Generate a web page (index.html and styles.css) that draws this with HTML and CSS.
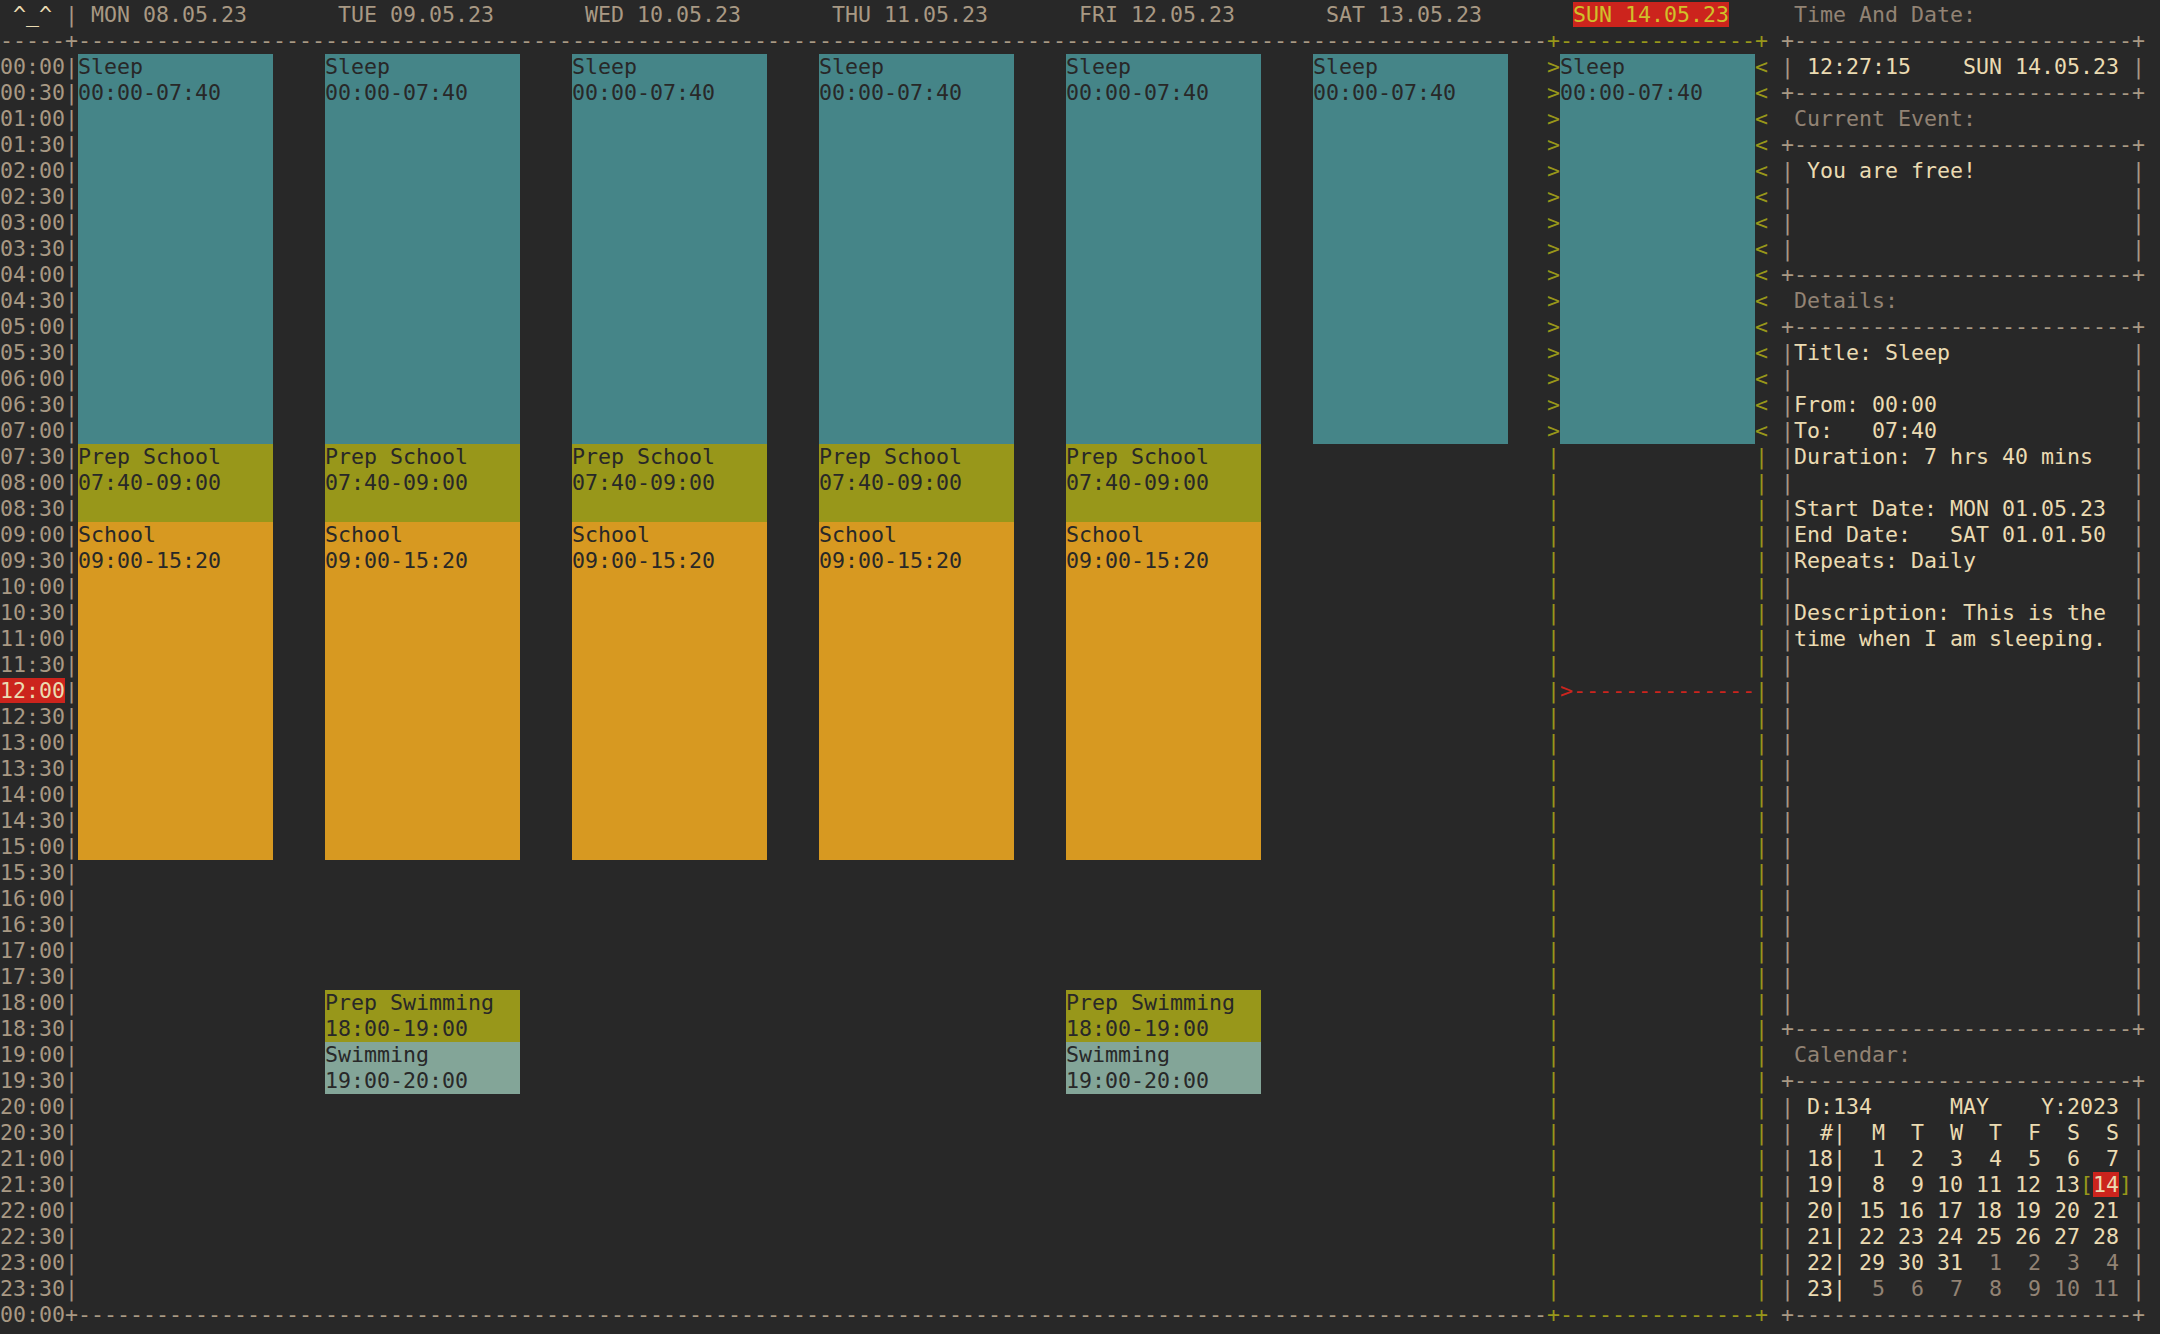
FILE: index.html
```html
<!DOCTYPE html>
<html lang="en">
<head>
<meta charset="utf-8">
<title>Week calendar</title>
<link rel="stylesheet" href="styles.css">
</head>
<body>
<div class="screen">
  <section class="week">
    <div class="lane head">
      <div class="time"> <span class="face">^_^</span> |</div>
      <div class="day-head">MON 08.05.23</div>
      <div class="day-head">TUE 09.05.23</div>
      <div class="day-head">WED 10.05.23</div>
      <div class="day-head">THU 11.05.23</div>
      <div class="day-head">FRI 12.05.23</div>
      <div class="day-head">SAT 13.05.23</div>
      <div class="today-head"><span class="cur">SUN 14.05.23</span></div>
    </div>
    <div class="rule">
      <span class="lead">-----+</span><span class="fill">-----------------------------------------------------------------------------------------------------------------</span><span class="end">+---------------+</span>
    </div>
    <div class="lane body">
      <div class="time times">00:00|
00:30|
01:00|
01:30|
02:00|
02:30|
03:00|
03:30|
04:00|
04:30|
05:00|
05:30|
06:00|
06:30|
07:00|
07:30|
08:00|
08:30|
09:00|
09:30|
10:00|
10:30|
11:00|
11:30|
<span class="hl">12:00</span>|
12:30|
13:00|
13:30|
14:00|
14:30|
15:00|
15:30|
16:00|
16:30|
17:00|
17:30|
18:00|
18:30|
19:00|
19:30|
20:00|
20:30|
21:00|
21:30|
22:00|
22:30|
23:00|
23:30|</div>
      <div class="day">
        <div class="ev sleep" style="grid-row: 1 / span 15">Sleep
00:00-07:40</div>
        <div class="ev prep" style="grid-row: 16 / span 3">Prep School
07:40-09:00</div>
        <div class="ev school" style="grid-row: 19 / span 13">School
09:00-15:20</div>
      </div>
      <div class="day">
        <div class="ev sleep" style="grid-row: 1 / span 15">Sleep
00:00-07:40</div>
        <div class="ev prep" style="grid-row: 16 / span 3">Prep School
07:40-09:00</div>
        <div class="ev school" style="grid-row: 19 / span 13">School
09:00-15:20</div>
        <div class="ev prep" style="grid-row: 37 / span 2">Prep Swimming
18:00-19:00</div>
        <div class="ev swim" style="grid-row: 39 / span 2">Swimming
19:00-20:00</div>
      </div>
      <div class="day">
        <div class="ev sleep" style="grid-row: 1 / span 15">Sleep
00:00-07:40</div>
        <div class="ev prep" style="grid-row: 16 / span 3">Prep School
07:40-09:00</div>
        <div class="ev school" style="grid-row: 19 / span 13">School
09:00-15:20</div>
      </div>
      <div class="day">
        <div class="ev sleep" style="grid-row: 1 / span 15">Sleep
00:00-07:40</div>
        <div class="ev prep" style="grid-row: 16 / span 3">Prep School
07:40-09:00</div>
        <div class="ev school" style="grid-row: 19 / span 13">School
09:00-15:20</div>
      </div>
      <div class="day">
        <div class="ev sleep" style="grid-row: 1 / span 15">Sleep
00:00-07:40</div>
        <div class="ev prep" style="grid-row: 16 / span 3">Prep School
07:40-09:00</div>
        <div class="ev school" style="grid-row: 19 / span 13">School
09:00-15:20</div>
        <div class="ev prep" style="grid-row: 37 / span 2">Prep Swimming
18:00-19:00</div>
        <div class="ev swim" style="grid-row: 39 / span 2">Swimming
19:00-20:00</div>
      </div>
      <div class="day">
        <div class="ev sleep" style="grid-row: 1 / span 15">Sleep
00:00-07:40</div>
      </div>
      <div class="today">
        <div class="marks left">&gt;
&gt;
&gt;
&gt;
&gt;
&gt;
&gt;
&gt;
&gt;
&gt;
&gt;
&gt;
&gt;
&gt;
&gt;
|
|
|
|
|
|
|
|
|
|
|
|
|
|
|
|
|
|
|
|
|
|
|
|
|
|
|
|
|
|
|
|
|</div>
        <div class="ev sleep" style="grid-row: 1 / span 15">Sleep
00:00-07:40</div>
        <div class="now">&gt;--------------</div>
        <div class="marks right">&lt;
&lt;
&lt;
&lt;
&lt;
&lt;
&lt;
&lt;
&lt;
&lt;
&lt;
&lt;
&lt;
&lt;
&lt;
|
|
|
|
|
|
|
|
|
|
|
|
|
|
|
|
|
|
|
|
|
|
|
|
|
|
|
|
|
|
|
|
|</div>
      </div>
    </div>
    <div class="rule">
      <span class="lead">00:00+</span><span class="fill">-----------------------------------------------------------------------------------------------------------------</span><span class="end">+---------------+</span>
    </div>
  </section>

  <aside class="side">
    <div class="title">Time And Date:</div>
    <div class="hr">+--------------------------+</div>
    <div class="box rows-1">
      <div class="rail">|</div>
      <div class="inner"> 12:27:15    SUN 14.05.23 </div>
      <div class="rail">|</div>
    </div>
    <div class="hr">+--------------------------+</div>

    <div class="title">Current Event:</div>
    <div class="hr">+--------------------------+</div>
    <div class="box rows-4">
      <div class="rail">|
|
|
|</div>
      <div class="inner"> You are free!</div>
      <div class="rail">|
|
|
|</div>
    </div>
    <div class="hr">+--------------------------+</div>

    <div class="title">Details:</div>
    <div class="hr">+--------------------------+</div>
    <div class="box rows-26">
      <div class="rail">|
|
|
|
|
|
|
|
|
|
|
|
|
|
|
|
|
|
|
|
|
|
|
|
|
|</div>
      <div class="inner">Title: Sleep

From: 00:00
To:   07:40
Duration: 7 hrs 40 mins

Start Date: MON 01.05.23
End Date:   SAT 01.01.50
Repeats: Daily

Description: This is the
time when I am sleeping.</div>
      <div class="rail">|
|
|
|
|
|
|
|
|
|
|
|
|
|
|
|
|
|
|
|
|
|
|
|
|
|</div>
    </div>
    <div class="hr">+--------------------------+</div>

    <div class="title">Calendar:</div>
    <div class="hr">+--------------------------+</div>
    <div class="box rows-8">
      <div class="rail">|
|
|
|
|
|
|
|</div>
      <div class="inner cal"> D:134      MAY    Y:2023 
  #|  M  T  W  T  F  S  S 
 18|  1  2  3  4  5  6  7 
 19|  8  9 10 11 12 13<span class="br">[</span><span class="sel">14</span><span class="br">]</span>
 20| 15 16 17 18 19 20 21 
 21| 22 23 24 25 26 27 28 
 22| 29 30 31<span class="dim">  1  2  3  4</span> 
 23|<span class="dim">  5  6  7  8  9 10 11</span> </div>
      <div class="rail">|
|
|
|
|
|
|
|</div>
    </div>
    <div class="hr">+--------------------------+</div>
  </aside>
</div>
</body>
</html>
```

FILE: styles.css
```css
* {
  box-sizing: border-box;
  margin: 0;
  padding: 0;
}

html,
body {
  background: #282828;
}

body {
  width: 2160px;
  height: 1334px;
  overflow: hidden;
  font-family: "DejaVu Sans Mono", monospace;
  font-size: 21.6px;
  line-height: 26px;
  color: #a89984;
}

.screen {
  display: flex;
  padding-top: 2px;
}

/* ---------- week grid ---------- */
.week {
  flex: 0 0 1768px;
  width: 1768px;
}

.lane {
  display: flex;
  white-space: pre;
}

.lane > .time {
  flex: 0 0 78px;
}

.lane > .day,
.lane > .day-head {
  flex: 0 0 195px;
}

.lane > .day + .day,
.lane > .day-head + .day-head {
  margin-left: 52px;
}

.lane > .today,
.lane > .today-head {
  flex: 0 0 221px;
  margin-left: 39px;
}

.head {
  height: 26px;
}

.day-head {
  padding-left: 13px;
}

.today-head {
  padding-left: 26px;
}

.face {
  color: #ebdbb2;
}

.cur {
  background: #cc241d;
  color: #d0c02a;
}

.rule {
  display: flex;
  white-space: pre;
  height: 26px;
  overflow: hidden;
}

.rule .lead {
  flex: 0 0 78px;
}

.rule .fill {
  flex: 0 0 1469px;
}

.rule .end {
  flex: 0 0 221px;
  color: #98971a;
}

.body {
  height: 1248px;
}

.times {
  white-space: pre;
}

.hl {
  background: #cc241d;
  color: #ebdbb2;
}

.day {
  display: grid;
  grid-template-rows: repeat(48, 26px);
}

.ev {
  white-space: pre;
  color: #282828;
  overflow: hidden;
}

.ev.sleep {
  background: #458588;
}

.ev.prep {
  background: #98971a;
}

.ev.school {
  background: #d79921;
}

.ev.swim {
  background: #83a598;
}

.today {
  display: grid;
  grid-template-columns: 13px 195px 13px;
  grid-template-rows: repeat(48, 26px);
}

.today .ev {
  grid-column: 2;
}

.marks {
  grid-row: 1 / -1;
  white-space: pre;
  color: #98971a;
}

.marks.left {
  grid-column: 1;
}

.marks.right {
  grid-column: 3;
}

.now {
  grid-column: 2;
  grid-row: 25;
  white-space: pre;
  color: #cc241d;
}

/* ---------- side panel ---------- */
.side {
  flex: 0 0 392px;
  padding-left: 13px;
}

.side > * {
  width: 364px;
}

.title {
  padding-left: 13px;
  height: 26px;
  color: #928374;
  white-space: pre;
}

.hr {
  height: 26px;
  white-space: pre;
}

.box {
  display: flex;
}

.box .rail {
  flex: 0 0 13px;
  white-space: pre;
}

.box .inner {
  flex: 0 0 338px;
  white-space: pre;
  color: #ebdbb2;
}

.rows-1 {
  height: 26px;
}

.rows-4 {
  height: 104px;
}

.rows-26 {
  height: 676px;
}

.rows-8 {
  height: 208px;
}

.cal .br {
  color: #98971a;
}

.cal .sel {
  background: #cc241d;
  color: #ebdbb2;
}

.cal .dim {
  color: #928374;
}
```
